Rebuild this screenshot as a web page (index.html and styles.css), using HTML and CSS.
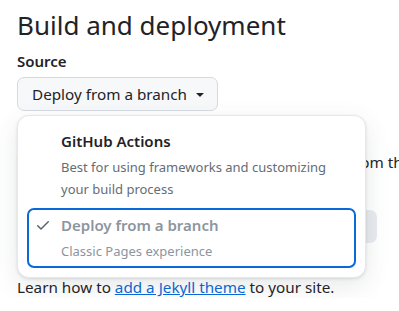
FILE: index.html
```html
<!DOCTYPE html>
<html lang="en">
<head>
    <meta charset="UTF-8">
    <meta name="viewport" content="width=device-width, initial-scale=1.0">
    <title>Build and deployment</title>
    <link rel="stylesheet" href="styles.css">
</head>
<body>
    <div class="page">
        <h2 class="title">Build and deployment</h2>
        <div class="label">Source</div>
        <button class="select-btn">
            Deploy from a branch
            <svg class="caret" width="16" height="16" viewBox="0 0 16 16"><path d="m4.427 7.427 3.396 3.396a.25.25 0 0 0 .354 0l3.396-3.396A.25.25 0 0 0 11.396 7H4.604a.25.25 0 0 0-.177.427Z"/></svg>
        </button>

        <div class="below">
            <p class="branch-note">Your GitHub Pages site is currently being built from the main branch.</p>
            <div class="branch-row">
                <span class="branch-btn">main</span>
                <span class="branch-btn">/ (root)</span>
                <span class="branch-btn save">Save</span>
            </div>
            <p class="jekyll">Learn how to <a href="#">add a Jekyll theme</a> to your site.</p>

            <!-- dropdown open over the content -->
            <div class="menu">
                <div class="menu-item">
                    <span class="check"></span>
                    <div>
                        <div class="item-title">GitHub Actions</div>
                        <div class="item-desc">Best for using frameworks and customizing your build process</div>
                    </div>
                </div>
                <div class="menu-item selected">
                    <span class="check">
                        <svg width="16" height="16" viewBox="0 0 16 16"><path d="M13.78 4.22a.75.75 0 0 1 0 1.06l-7.25 7.25a.75.75 0 0 1-1.06 0L2.22 9.28a.751.751 0 0 1 .018-1.042.751.751 0 0 1 1.042-.018L6 10.94l6.72-6.72a.75.75 0 0 1 1.06 0Z"/></svg>
                    </span>
                    <div>
                        <div class="item-title">Deploy from a branch</div>
                        <div class="item-desc">Classic Pages experience</div>
                    </div>
                </div>
            </div>
        </div>
    </div>
</body>
</html>
```

FILE: styles.css
```css
body {
    margin: 0;
    font-family: 'Noto Sans', 'Liberation Sans', sans-serif;
    font-size: 15.25px;
    color: #1f2328;
    background: #ffffff;
    overflow: hidden;
}
.page {
    padding: 0 17px;
}
.title {
    font-size: 26px;
    font-weight: 400;
    line-height: 34px;
    margin: 8px 0 8px;
}
.label {
    font-weight: 600;
    font-size: 15px;
    line-height: 22px;
    margin-bottom: 5px;
}
.select-btn {
    display: flex;
    align-items: center;
    gap: 5px;
    height: 34px;
    padding: 0 9px 0 14px;
    font-family: inherit;
    font-size: 15.25px;
    color: #1f2328;
    background: #f6f8fa;
    border: 1px solid #d5dae0;
    border-radius: 7px;
}
.caret {
    fill: #1f2328;
}
.below {
    position: relative;
    padding-top: 40px;
}
.branch-note {
    margin: 0;
    line-height: 22px;
    white-space: nowrap;
}
.branch-row {
    display: flex;
    justify-content: flex-end;
    margin: 37px 5px 0 0;
    gap: 8px;
}
.branch-btn {
    height: 33px;
    padding: 0 14px;
    line-height: 33px;
    background: #f6f8fa;
    border-radius: 7px;
    color: #8c959f;
}
.branch-btn.save {
    background: #e8ebef;
}
.jekyll {
    margin: 33px 0 0;
    line-height: 22px;
}
.jekyll a {
    color: #0969da;
}
.menu {
    position: absolute;
    top: 4px;
    left: 0;
    width: 349px;
    box-sizing: border-box;
    padding: 8px 9px 9px;
    background: #ffffff;
    border: 1px solid #e4e8ec;
    border-radius: 12px;
    box-shadow: 0 1px 3px rgba(31, 35, 40, 0.12), 0 8px 24px rgba(66, 74, 83, 0.12);
}
.menu-item {
    display: flex;
    padding: 4px 6px;
    border: 2px solid transparent;
    border-radius: 7px;
}
.menu-item + .menu-item {
    margin-top: 2px;
}
.menu-item.selected {
    border-color: #0969da;
}
.check {
    flex: none;
    width: 16px;
    height: 22px;
    margin-right: 10px;
    display: flex;
    align-items: center;
    fill: #59636e;
}
.item-title {
    font-weight: 600;
    font-size: 15px;
    line-height: 22px;
}
.item-desc {
    margin-top: 4px;
    font-size: 13px;
    line-height: 22px;
    color: #656d76;
}
.selected .item-title {
    color: #8c959f;
}
.selected .item-desc {
    color: #8c959f;
}
```
